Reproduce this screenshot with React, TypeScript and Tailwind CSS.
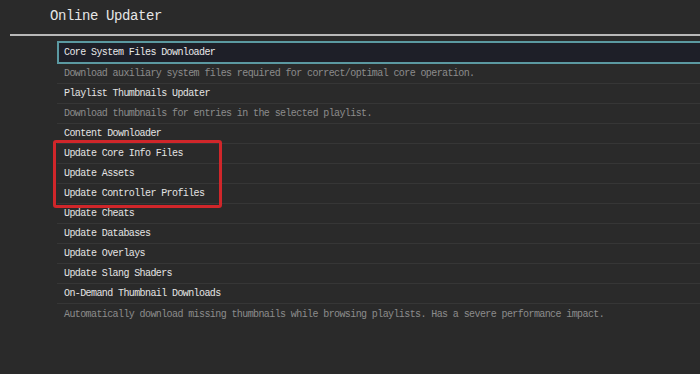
type Item = { label: string; sub?: string };

const items: Item[] = [
  {
    label: "Core System Files Downloader",
    sub: "Download auxiliary system files required for correct/optimal core operation.",
  },
  {
    label: "Playlist Thumbnails Updater",
    sub: "Download thumbnails for entries in the selected playlist.",
  },
  { label: "Content Downloader" },
  { label: "Update Core Info Files" },
  { label: "Update Assets" },
  { label: "Update Controller Profiles" },
  { label: "Update Cheats" },
  { label: "Update Databases" },
  { label: "Update Overlays" },
  { label: "Update Slang Shaders" },
  {
    label: "On-Demand Thumbnail Downloads",
    sub: "Automatically download missing thumbnails while browsing playlists. Has a severe performance impact.",
  },
];

const mono = "font-['Liberation_Mono','DejaVu_Sans_Mono',monospace]";

function Row({ text, sub, selected, last }: { text: string; sub?: boolean; selected?: boolean; last?: boolean }) {
  return (
    <div
      className={`flex h-5 items-center pl-[7px] text-[10px] tracking-[-0.6px] ${
        sub ? "text-[#8c8c8c]" : "text-[#e4e4e4]"
      } ${last ? "" : "border-b border-[#363636]"} ${selected ? "" : ""}`}
    >
      {text}
    </div>
  );
}

export default function App() {
  return (
    <div className={`h-[374px] w-[700px] overflow-hidden bg-[#2a2a2a] ${mono}`}>
      <div className="flex h-[34px] items-center pl-[50px] pb-[1px] text-[14px] tracking-[-0.4px] text-[#e6e6e6]">
        Online Updater
      </div>
      <div className="ml-[10px] h-[2px] bg-[#b8b8b8]" />

      <div className="ml-[57px] mt-[5px] w-[700px]">
        {/* selected entry */}
        <div className="flex h-[23px] items-center border-y-2 border-l-2 border-[#5b99a1] bg-[#1e1f28] pl-[5px] text-[10px] tracking-[-0.6px] text-[#e8e8e8]">
          {items[0].label}
        </div>
        <Row text={items[0].sub!} sub />
        <Row text={items[1].label} />
        <Row text={items[1].sub!} sub />
        <Row text={items[2].label} />

        <div className="relative">
          <Row text={items[3].label} />
          <Row text={items[4].label} />
          <Row text={items[5].label} />
          <div className="pointer-events-none absolute -left-[4px] -top-[4px] h-[68px] w-[169px] rounded-[3px] border-[3px] border-[#d0262a]" />
        </div>

        {items.slice(6, 10).map((it) => (
          <Row key={it.label} text={it.label} />
        ))}
        <Row text={items[10].label} />
        <Row text={items[10].sub!} sub last />
      </div>
    </div>
  );
}
